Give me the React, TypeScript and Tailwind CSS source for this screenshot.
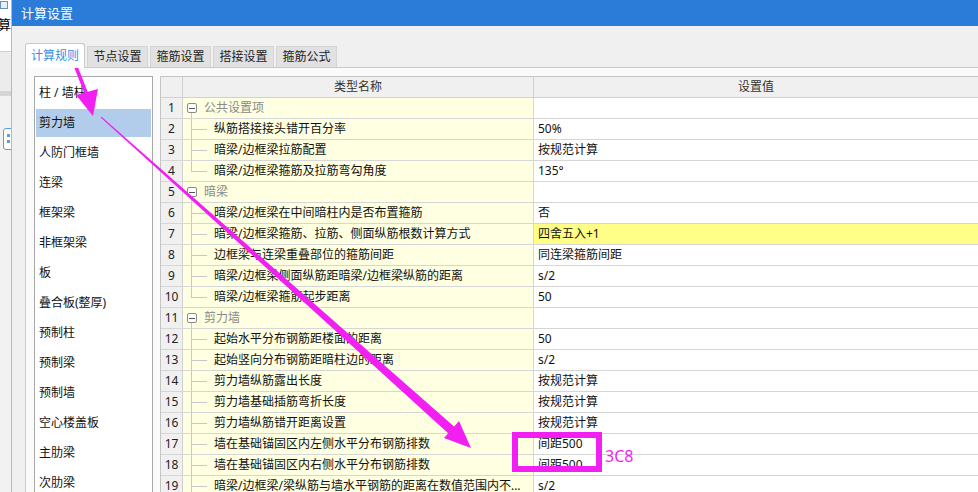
import React from "react";

type Row = {
  n: number;
  name: string;
  value: string;
  group?: boolean;
  last?: boolean;
  hl?: boolean;
};

const rows: Row[] = [
  { n: 1, name: "公共设置项", value: "", group: true },
  { n: 2, name: "纵筋搭接接头错开百分率", value: "50%" },
  { n: 3, name: "暗梁/边框梁拉筋配置", value: "按规范计算" },
  { n: 4, name: "暗梁/边框梁箍筋及拉筋弯勾角度", value: "135°", last: true },
  { n: 5, name: "暗梁", value: "", group: true },
  { n: 6, name: "暗梁/边框梁在中间暗柱内是否布置箍筋", value: "否" },
  { n: 7, name: "暗梁/边框梁箍筋、拉筋、侧面纵筋根数计算方式", value: "四舍五入+1", hl: true },
  { n: 8, name: "边框梁与连梁重叠部位的箍筋间距", value: "同连梁箍筋间距" },
  { n: 9, name: "暗梁/边框梁侧面纵筋距暗梁/边框梁纵筋的距离", value: "s/2" },
  { n: 10, name: "暗梁/边框梁箍筋起步距离", value: "50", last: true },
  { n: 11, name: "剪力墙", value: "", group: true },
  { n: 12, name: "起始水平分布钢筋距楼面的距离", value: "50" },
  { n: 13, name: "起始竖向分布钢筋距暗柱边的距离", value: "s/2" },
  { n: 14, name: "剪力墙纵筋露出长度", value: "按规范计算" },
  { n: 15, name: "剪力墙基础插筋弯折长度", value: "按规范计算" },
  { n: 16, name: "剪力墙纵筋错开距离设置", value: "按规范计算" },
  { n: 17, name: "墙在基础锚固区内左侧水平分布钢筋排数", value: "间距500" },
  { n: 18, name: "墙在基础锚固区内右侧水平分布钢筋排数", value: "间距500" },
  { n: 19, name: "暗梁/边框梁/梁纵筋与墙水平钢筋的距离在数值范围内不...", value: "s/2" },
];

const sideItems = [
  "柱 / 墙柱",
  "剪力墙",
  "人防门框墙",
  "连梁",
  "框架梁",
  "非框架梁",
  "板",
  "叠合板(整厚)",
  "预制柱",
  "预制梁",
  "预制墙",
  "空心楼盖板",
  "主肋梁",
  "次肋梁",
];

const tabs = ["节点设置", "箍筋设置", "搭接设置", "箍筋公式"];

function NameCell({ r }: { r: Row }) {
  if (r.group) {
    return (
      <div className="relative h-full flex items-center pl-[21px] text-[#8a8a8a]">
        <span className="absolute left-[4px] top-[5px] w-[10px] h-[10px] border border-[#8a8a8a] rounded-[2px] bg-white flex items-center justify-center">
          <span className="w-[6px] h-px bg-[#555]"></span>
        </span>
        <span className="absolute left-[8px] top-[15px] bottom-0 w-px bg-[#c8c8c8]"></span>
        {r.name}
      </div>
    );
  }
  return (
    <div className="relative h-full flex items-center pl-[31px] text-[#111]">
      <span className={`absolute left-[8px] top-0 w-px bg-[#c8c8c8] ${r.last ? "h-[10px]" : "bottom-0"}`}></span>
      <span className="absolute left-[8px] top-[10px] w-[16px] h-px bg-[#c8c8c8]"></span>
      <span className="whitespace-nowrap">{r.name}</span>
    </div>
  );
}

function Annotations() {
  return (
    <svg className="absolute inset-0 pointer-events-none" width="978" height="492" viewBox="0 0 978 492">
      <line x1="72" y1="57" x2="87" y2="95" stroke="#f21ff2" strokeWidth="3.5" />
      <polygon points="76,95 98,89 93,116" fill="#f21ff2" />
      <polygon points="101.3,116.6 455.5,427.8 449.5,434.5 100.7,117.4" fill="#f21ff2" />
      <polygon points="471,448 444,438 459,421" fill="#f21ff2" />
      <rect x="515" y="435" width="84" height="34" fill="none" stroke="#f21ff2" strokeWidth="6" />
    </svg>
  );
}

export default function App() {
  return (
    <div className="relative w-[978px] h-[492px] overflow-hidden flex bg-[#f0f0f0] text-[12px] leading-none font-['Noto_Sans','Noto_Sans_CJK_SC',sans-serif]">
      {/* app behind the dialog */}
      <div className="w-[12px] shrink-0 flex flex-col border-r border-[#b9b9b9] bg-[#f2f2f2] overflow-hidden">
        <div className="h-[12px] bg-white flex items-start">
          <span className="mt-[1px] w-[8px] h-[8px] border border-[#6b8fb8] bg-[#e8eef6]"></span>
        </div>
        <div className="h-[40px] bg-white border-b border-[#cfcfcf] text-[13px] text-black pt-[6px] -ml-[2px] whitespace-nowrap">算设</div>
        <div className="h-[44px] bg-[#ececec] border-b-[5px] border-[#d5d5d5]"></div>
        <div className="h-[32px]"></div>
        <div className="ml-[3px] w-[12px] h-[22px] border border-[#5d9be0] rounded-[3px] bg-white flex flex-col gap-[3px] pt-[5px] pl-[3px]">
          <span className="w-[3px] h-[3px] bg-[#5d9be0]"></span>
          <span className="w-[3px] h-[3px] bg-[#5d9be0]"></span>
        </div>
        <div className="flex-1"></div>
      </div>

      {/* dialog */}
      <div className="flex-1 flex flex-col">
        <div className="h-[26px] shrink-0 bg-[#2b7cd8] text-white text-[13px] flex items-center pl-[9px]">计算设置</div>
        <div className="flex-1 flex flex-col pl-[13px] pt-[17px]">
          <div className="flex items-end h-[24px] gap-[2px]">
            <div className="h-[25px] w-[60px] bg-white border border-b-0 border-[#c9c9c9] rounded-t-[3px] text-[#3a8ee6] flex items-center justify-center -mb-px relative z-10">计算规则</div>
            {tabs.map((t) => (
              <div key={t} className="h-[21px] w-[61px] bg-[#e1e1e1] border border-b-0 border-[#d4d4d4] text-[#222] flex items-center justify-center">
                {t}
              </div>
            ))}
          </div>
          <div className="flex-1 flex gap-[7px] bg-[#fafafa] border-l border-t border-[#c9c9c9] pl-[8px] pt-[8px]">
            {/* side list */}
            <div className="w-[119px] shrink-0 bg-white border border-[#a8a8a8] border-b-0 flex flex-col pt-px">
              {sideItems.map((s, i) => (
                <div key={s} className="h-[30px] flex items-center px-px">
                  <div className={`w-full h-[28px] flex items-center pl-[3px] text-[#111] ${i === 1 ? "bg-[#b1cdeb]" : ""}`}>{s}</div>
                </div>
              ))}
            </div>

            {/* table */}
            <div className="flex-1 bg-white border-l border-t border-[#c4c4c4] flex flex-col">
              <div className="h-[21px] flex bg-[#f0f0f0] border-b border-[#d0d0d0] text-[#333]">
                <div className="w-[22px] shrink-0 border-r border-[#d0d0d0]"></div>
                <div className="w-[351px] shrink-0 border-r border-[#d0d0d0] flex items-center justify-center">类型名称</div>
                <div className="flex-1 flex items-center justify-center">设置值</div>
              </div>
              {rows.map((r) => (
                <div key={r.n} className="h-[21px] shrink-0 flex border-b border-[#d6d6d6]">
                  <div className="w-[22px] shrink-0 bg-[#f0f0f0] border-r border-[#d0d0d0] flex items-center justify-center text-[#222]">{r.n}</div>
                  <div className="w-[351px] shrink-0 bg-[#ffffe1] border-r border-[#d6d6d6]">
                    <NameCell r={r} />
                  </div>
                  <div className={`flex-1 flex items-center pl-[4px] text-[#111] ${r.hl ? "bg-[#ffff88]" : ""}`}>{r.value}</div>
                </div>
              ))}
            </div>
          </div>
        </div>
      </div>

      <Annotations />
      <div className="absolute left-[605px] top-[448px] text-[16px] leading-none text-[#f21ff2] font-['Noto_Sans',sans-serif]">3C8</div>
    </div>
  );
}
